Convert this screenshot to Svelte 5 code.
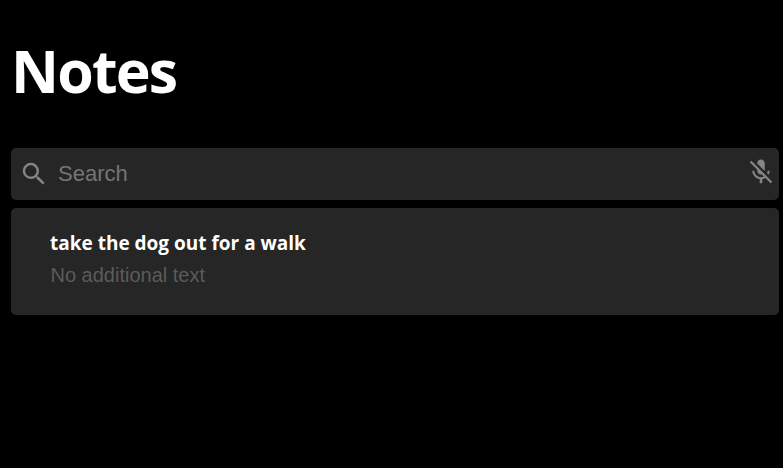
<script>
  const notes = [{ title: 'take the dog out for a walk', body: 'No additional text' }];
</script>

<main>
  <h1>Notes</h1>
  <div class="search">
    <svg class="glass" viewBox="0 0 24 24"><path d="M15.5 14h-.79l-.28-.27A6.471 6.471 0 0 0 16 9.5 6.5 6.5 0 1 0 9.5 16c1.61 0 3.09-.59 4.23-1.57l.27.28v.79l5 4.99L20.49 19l-4.99-5zm-6 0C7.01 14 5 11.99 5 9.5S7.01 5 9.5 5 14 7.01 14 9.5 11.99 14 9.5 14z"/></svg>
    <input placeholder="Search" />
    <svg class="mic" viewBox="0 0 24 24"><path d="M19 11h-1.7c0 .74-.16 1.43-.43 2.05l1.23 1.23c.56-.98.9-2.09.9-3.28zm-4.02.17c0-.06.02-.11.02-.17V5c0-1.66-1.34-3-3-3S9 3.34 9 5v.18l5.98 5.99zM4.27 3 3 4.27l6.01 6.01V11c0 1.66 1.33 3 2.99 3 .22 0 .44-.03.65-.08l1.66 1.66c-.71.33-1.5.52-2.31.52-2.76 0-5.3-2.1-5.3-5.1H5c0 3.41 2.72 6.23 6 6.72V21h2v-3.28c.91-.13 1.77-.45 2.54-.9L19.73 21 21 19.73 4.27 3z"/></svg>
  </div>
  {#each notes as note}
    <article>
      <h2>{note.title}</h2>
      <p>{note.body}</p>
    </article>
  {/each}
</main>

<style>
  :global(body) { background: #000; }
  main { box-sizing: border-box; min-height: 468px; padding: 30px 4px 0 11px; background: #000; font-family: "Open Sans", "Noto Sans", sans-serif; }
  h1 { margin: 0; height: 118px; color: #fff; font-size: 59px; line-height: 80px; font-weight: 700; letter-spacing: -1.8px; }
  .search { display: flex; align-items: center; box-sizing: border-box; height: 52px; padding: 0 3px 0 8px; border-radius: 5px; background: #262626; }
  svg { flex: none; fill: #858585; }
  .glass { width: 30px; height: 30px; }
  input { flex: 1; min-width: 0; margin: 0 0 0 9px; padding: 0; border: 0; outline: 0; background: transparent; color: #fff; font: 22px "Liberation Sans", Arial, sans-serif; }
  input::placeholder { color: #757575; opacity: 1; }
  .mic { width: 30px; height: 30px; margin-bottom: 4px; }
  article { box-sizing: border-box; height: 107px; margin-top: 8px; padding: 22px 39px; border-radius: 5px; background: #262626; }
  h2 { margin: 0; color: #fff; font-size: 19px; line-height: 27px; font-weight: 700; }
  p { margin: 6px 0 0; color: #5b5b5b; font: 20px/24px "Liberation Sans", Arial, sans-serif; text-indent: 0.5px; }
</style>
